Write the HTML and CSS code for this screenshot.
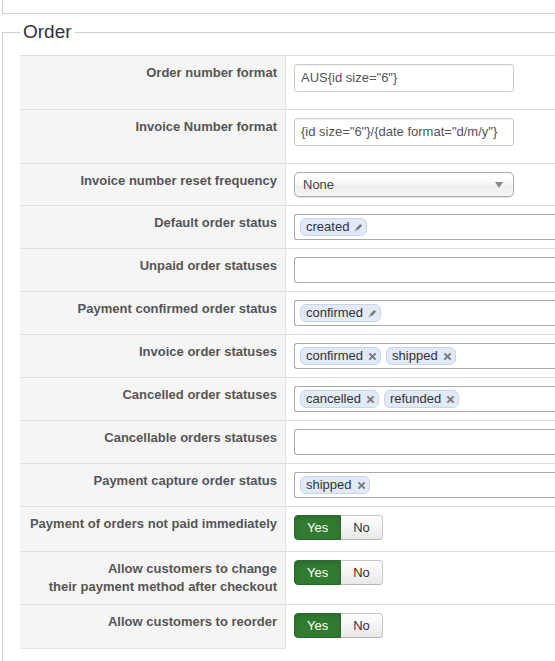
FILE: index.html
```html
<!DOCTYPE html>
<html lang="en">
<head>
<meta charset="utf-8">
<title>Order configuration</title>
<link rel="stylesheet" href="styles.css">
</head>
<body>
<div class="prev-group"></div>
<fieldset class="group">
  <legend>Order</legend>
  <table class="cfg">
    <tr>
      <td class="key">Order number format</td>
      <td class="val"><div class="text-in">AUS{id size="6"}</div></td>
    </tr>
    <tr>
      <td class="key">Invoice Number format</td>
      <td class="val"><div class="text-in">{id size="6"}/{date format="d/m/y"}</div></td>
    </tr>
    <tr>
      <td class="key">Invoice number reset frequency</td>
      <td class="val"><div class="select"><span>None</span><span class="arrow"></span></div></td>
    </tr>
    <tr>
      <td class="key">Default order status</td>
      <td class="val"><div class="tags">
        <span class="tag">created<svg class="ico" viewBox="0 0 10 10" width="9" height="9"><path d="M7 1 L9 3 L4 8 L2 6 Z" fill="#777"/><path d="M1.6 6.6 L3.4 8.4 L0.6 9.4 Z" fill="#999"/></svg></span>
      </div></td>
    </tr>
    <tr>
      <td class="key">Unpaid order statuses</td>
      <td class="val"><div class="tags"></div></td>
    </tr>
    <tr>
      <td class="key">Payment confirmed order status</td>
      <td class="val"><div class="tags">
        <span class="tag">confirmed<svg class="ico" viewBox="0 0 10 10" width="9" height="9"><path d="M7 1 L9 3 L4 8 L2 6 Z" fill="#777"/><path d="M1.6 6.6 L3.4 8.4 L0.6 9.4 Z" fill="#999"/></svg></span>
      </div></td>
    </tr>
    <tr>
      <td class="key">Invoice order statuses</td>
      <td class="val"><div class="tags">
        <span class="tag">confirmed<svg class="ico" viewBox="0 0 10 10" width="9" height="9"><path d="M1.5 1.5L8.5 8.5M8.5 1.5L1.5 8.5" stroke="#7a7a7a" stroke-width="2.2"/></svg></span>
        <span class="tag">shipped<svg class="ico" viewBox="0 0 10 10" width="9" height="9"><path d="M1.5 1.5L8.5 8.5M8.5 1.5L1.5 8.5" stroke="#7a7a7a" stroke-width="2.2"/></svg></span>
      </div></td>
    </tr>
    <tr>
      <td class="key">Cancelled order statuses</td>
      <td class="val"><div class="tags">
        <span class="tag">cancelled<svg class="ico" viewBox="0 0 10 10" width="9" height="9"><path d="M1.5 1.5L8.5 8.5M8.5 1.5L1.5 8.5" stroke="#7a7a7a" stroke-width="2.2"/></svg></span>
        <span class="tag">refunded<svg class="ico" viewBox="0 0 10 10" width="9" height="9"><path d="M1.5 1.5L8.5 8.5M8.5 1.5L1.5 8.5" stroke="#7a7a7a" stroke-width="2.2"/></svg></span>
      </div></td>
    </tr>
    <tr>
      <td class="key">Cancellable orders statuses</td>
      <td class="val"><div class="tags"></div></td>
    </tr>
    <tr>
      <td class="key">Payment capture order status</td>
      <td class="val"><div class="tags">
        <span class="tag">shipped<svg class="ico" viewBox="0 0 10 10" width="9" height="9"><path d="M1.5 1.5L8.5 8.5M8.5 1.5L1.5 8.5" stroke="#7a7a7a" stroke-width="2.2"/></svg></span>
      </div></td>
    </tr>
    <tr>
      <td class="key">Payment of orders not paid immediately</td>
      <td class="val"><div class="yesno"><span class="btn yes">Yes</span><span class="btn no">No</span></div></td>
    </tr>
    <tr>
      <td class="key">Allow customers to change<br>their payment method after checkout</td>
      <td class="val"><div class="yesno"><span class="btn yes">Yes</span><span class="btn no">No</span></div></td>
    </tr>
    <tr class="last">
      <td class="key">Allow customers to reorder</td>
      <td class="val"><div class="yesno"><span class="btn yes">Yes</span><span class="btn no">No</span></div></td>
    </tr>
  </table>
</fieldset>
</body>
</html>
```
FILE: styles.css
```css
html, body {
  margin: 0;
  padding: 0;
  background: #fff;
  overflow: hidden;
}
body {
  font-family: "Liberation Sans", Arial, sans-serif;
  font-size: 13px;
  line-height: 18px;
  color: #333;
}
.prev-group {
  margin-left: 2px;
  height: 13px;
  border-left: 1px solid #d0d0d0;
  border-bottom: 1px solid #d0d0d0;
}
.group {
  box-sizing: border-box;
  margin: 7px 0 0 2px;
  padding: 12px 0 0 17px;
  border: 1px solid #d0d0d0;
  border-right: 0;
  border-bottom: 0;
  min-width: 0;
  height: 640px;
}
.group legend {
  padding: 0 3px;
  margin: 0;
  font-size: 19px;
  line-height: 22px;
  color: #333;
}
.cfg {
  border-collapse: separate;
  border-spacing: 0;
  width: 100%;
  table-layout: fixed;
}
.cfg td {
  border-top: 1px solid #ddd;
  padding: 8px;
  vertical-align: top;
}
.cfg td.key {
  width: 249px;
  background: #f5f5f5;
  text-align: right;
  font-weight: bold;
  color: #555;
}
.cfg td.val {
  border-left: 1px solid #e3e3e3;
  padding-right: 0;
}
.cfg tr.last td.key {
  border-bottom: 1px solid #e3e3e3;
}
.text-in {
  box-sizing: border-box;
  width: 220px;
  height: 28px;
  padding: 0 6px;
  line-height: 26px;
  border: 1px solid #ccc;
  border-radius: 3px;
  color: #555;
  margin-bottom: 9px;
  box-shadow: inset 0 1px 1px rgba(0,0,0,0.05);
  white-space: nowrap;
}
.select {
  box-sizing: border-box;
  width: 220px;
  height: 25px;
  padding: 0 8px 0 8px;
  border: 1px solid #aaa;
  border-radius: 5px;
  background: linear-gradient(#fff 20%, #f6f6f6 50%, #eee 52%, #f4f4f4 100%);
  box-shadow: inset 0 0 3px #fff, 0 1px 1px rgba(0,0,0,0.1);
  display: flex;
  align-items: center;
  justify-content: space-between;
  color: #444;
}
.select .arrow {
  width: 0;
  height: 0;
  border-left: 4px solid transparent;
  border-right: 4px solid transparent;
  border-top: 6px solid #888;
  margin-right: 2px;
}
.tags {
  box-sizing: border-box;
  width: 100%;
  height: 26px;
  border: 1px solid #aaa;
  border-radius: 3px 0 0 3px;
  border-right: 0;
  padding: 3px 0 0 5px;
  display: flex;
  align-items: flex-start;
  gap: 5px;
  background: #fff;
}
.tag {
  box-sizing: border-box;
  height: 18px;
  display: inline-flex;
  align-items: center;
  gap: 5px;
  padding: 0 3px 0 5px;
  border: 1px solid #c9d5ee;
  border-radius: 6px;
  background: #e2e9f7;
  color: #333;
  line-height: 16px;
  white-space: nowrap;
}
.tag .ico {
  display: block;
  flex: none;
}
.yesno {
  display: inline-flex;
  margin-bottom: 3px;
}
.btn {
  box-sizing: border-box;
  height: 25px;
  line-height: 23px;
  padding: 0 12px;
  font-size: 13px;
}
.btn.yes {
  background: #317b31;
  border: 1px solid #2a6a2a;
  color: #fff;
  border-radius: 4px 0 0 4px;
  box-shadow: inset 0 2px 4px rgba(0,0,0,0.15);
}
.btn.no {
  background: linear-gradient(#fff, #e8e8e8);
  border: 1px solid #c8c8c8;
  border-left: 0;
  border-bottom-color: #b5b5b5;
  color: #333;
  border-radius: 0 4px 4px 0;
}
```
